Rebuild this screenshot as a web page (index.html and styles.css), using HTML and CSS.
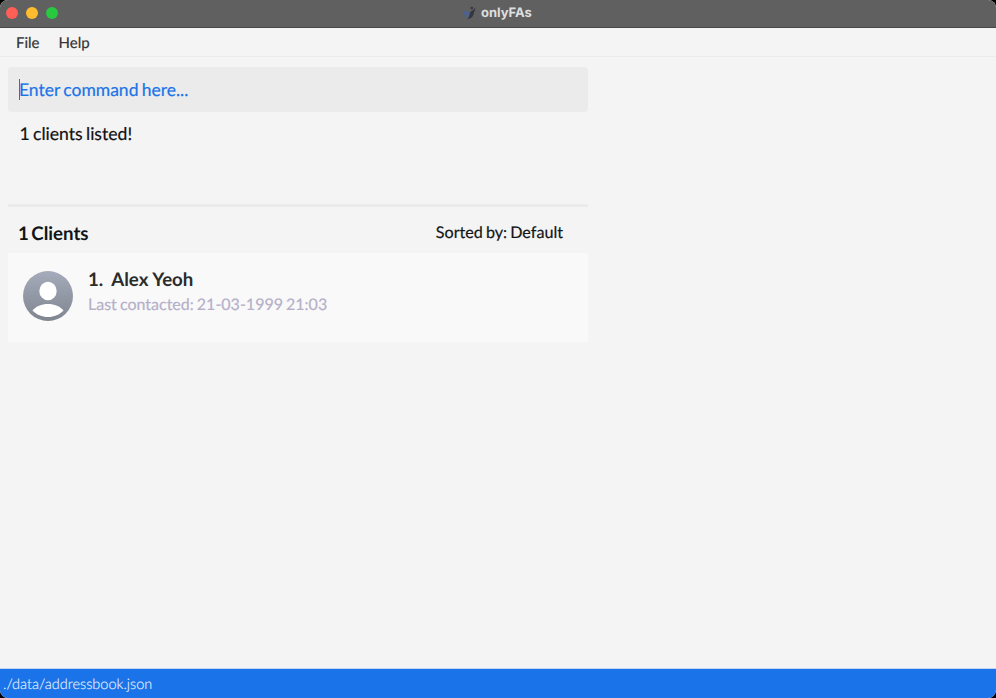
FILE: index.html
```html
<!DOCTYPE html>
<html lang="en">
<head>
<meta charset="utf-8">
<title>onlyFAs</title>
<link rel="stylesheet" href="styles.css">
</head>
<body>
<div class="window">
  <header class="titlebar">
    <div class="lights"><i class="light close"></i><i class="light minimize"></i><i class="light zoom"></i></div>
    <svg class="app-icon" viewBox="0 0 14 14" width="14" height="14">
      <circle cx="9.800" cy="2" r="1.300" fill="#34383e"/>
      <path d="M.6 4.200C2.400 5.400 4.300 4.800 6.600 5.800 8.400 7 8.200 9.600 6.300 12.400 4.400 10.400 1.300 9 .6 4.200Z" fill="#4d638e"/>
      <path d="M13.200 1.400C13.500 4 12.100 5.600 11.700 7.800 11.200 10.700 9 12.800 5.400 13.200 7.500 10.500 7.500 8.500 8.200 6.200 9.200 4.500 11.900 4.200 13.200 1.400Z" fill="#34383e"/>
    </svg>
    <span class="title">onlyFAs</span>
  </header>
  <nav class="menubar"><span>File</span><span>Help</span></nav>
  <main class="content">
    <div class="command"><span class="caret"></span><span>Enter command here...</span></div>
    <div class="result">1 clients listed!</div>
    <div class="list-head"><h1>1 Clients</h1><span class="sort">Sorted by: Default</span></div>
    <article class="card">
      <svg class="avatar" viewBox="0 0 50 50" width="50" height="50">
        <defs><linearGradient id="shade" x1="0" y1="0" x2="0" y2="1"><stop offset="0" stop-color="#a5abba"/><stop offset="1" stop-color="#7f8690"/></linearGradient></defs>
        <circle cx="25" cy="25" r="25" fill="url(#shade)"/>
        <ellipse cx="25" cy="20" rx="8.700" ry="9.200" fill="#fff"/>
        <path d="M9.500 39.500C13 35.200 18.500 32.900 25 32.900S37 35.200 40.500 39.500C36.500 43.700 31 46 25 46S13.500 43.700 9.500 39.500Z" fill="#fff"/>
      </svg>
      <div class="details">
        <h2><span>1.</span><span>Alex Yeoh</span></h2>
        <p>Last contacted: 21-03-1999 21:03</p>
      </div>
    </article>
  </main>
  <footer class="statusbar">./data/addressbook.json</footer>
</div>
</body>
</html>
```
FILE: styles.css
```css
body {
  margin: 0;
  background: #000;
  font-family: Lato, "Liberation Sans", sans-serif;
  text-rendering: geometricPrecision;
}

h1, h2, p {
  margin: 0;
}

.window {
  display: flex;
  flex-direction: column;
  box-sizing: border-box;
  width: 996px;
  height: 698px;
  overflow: hidden;
  border-radius: 8px;
  background: #f4f4f4;
}

.titlebar {
  display: flex;
  align-items: center;
  box-sizing: border-box;
  height: 28px;
  padding: 0 6px 1px;
  border-bottom: 1px solid #484848;
  background: #606060;
}

.lights {
  display: flex;
  gap: 8px;
  width: 456px;
}

.light {
  width: 12px;
  height: 12px;
  border-radius: 50%;
}

.close { background: #ff5f57; }
.minimize { background: #febc2e; }
.zoom { background: #28c840; }

.app-icon {
  flex: none;
  margin-right: 5px;
}

.title {
  color: #dedede;
  font: 700 13px Inter, sans-serif;
}

.menubar {
  display: flex;
  align-items: center;
  gap: 19px;
  box-sizing: border-box;
  height: 29px;
  padding: 1px 16px 0;
  border-bottom: 1px solid #ebebeb;
  color: #333;
  font-size: 15px;
  -webkit-text-stroke: 0.2px;
}

.content {
  flex: 1;
  width: 580px;
  padding: 10px 8px 0;
}

.command {
  display: flex;
  align-items: center;
  box-sizing: border-box;
  height: 45px;
  padding: 0 0 1px 11px;
  border-radius: 4px;
  background: #ebebeb;
  color: #1a73e8;
  font-size: 17.500px;
  word-spacing: -1.200px;
  -webkit-text-stroke: 0.2px;
}

.caret {
  width: 1px;
  height: 21px;
  margin-right: -1px;
  background: #1a73e8;
}

.result {
  box-sizing: border-box;
  height: 95px;
  padding: 10px 11.500px;
  border-bottom: 3px solid #ebebeb;
  color: #111;
  font-size: 17.600px;
  line-height: 23px;
  word-spacing: -1.200px;
  -webkit-text-stroke: 0.2px;
}

.list-head {
  display: flex;
  align-items: center;
  justify-content: space-between;
  height: 46px;
  padding: 0 25px 0 10px;
  color: #111517;
}

.list-head h1 {
  padding-top: 6px;
  font-size: 14pt;
  line-height: 24px;
  word-spacing: -2px;
}

.sort {
  padding-top: 5px;
  font-size: 12.100pt;
  word-spacing: -1px;
  -webkit-text-stroke: 0.2px;
}

.card {
  display: flex;
  gap: 15px;
  box-sizing: border-box;
  height: 89px;
  padding: 18px 15px;
  background: #f9f9f9;
}

.details {
  margin-top: -4px;
}

.details h2 {
  display: flex;
  gap: 8px;
  color: #2b2b2b;
  font-size: 14pt;
  line-height: 24px;
}

.details p {
  color: #b5b0c8;
  font-size: 12pt;
  line-height: 27px;
  word-spacing: -1px;
  -webkit-text-stroke: 0.2px;
}

.statusbar {
  box-sizing: border-box;
  height: 30px;
  padding-left: 3px;
  border-top: 1px solid #c4d6ef;
  background: #1a73e8;
  color: #e6effd;
  font-size: 14.500px;
  font-weight: 300;
  line-height: 31px;
  -webkit-text-stroke: 0.15px;
}
```
